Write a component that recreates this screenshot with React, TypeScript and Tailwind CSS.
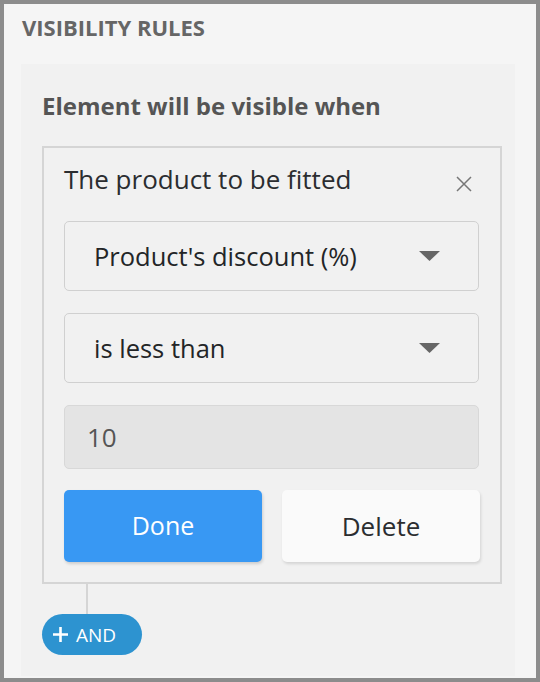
import React from 'react';

const font = { fontFamily: '"Open Sans", "Noto Sans", sans-serif' };

const Caret = () => (
  <svg width="21" height="10" viewBox="0 0 21 10" className="shrink-0">
    <path d="M0 0h21L10.5 10z" fill="#666" />
  </svg>
);

const SelectBox = ({ label }: { label: string }) => (
  <div className="flex h-[70px] w-[415px] items-center justify-between rounded-[5px] border border-[#d0d0d0] pl-[29px] pr-[38px]">
    <span className="text-[25.5px] leading-[32px] text-[#232527]">{label}</span>
    <Caret />
  </div>
);

export default function App() {
  return (
    <div
      className="box-border flex h-[682px] w-[540px] flex-col border-4 border-[#8c8c8c] bg-[#f5f5f5]"
      style={font}
    >
      <div className="h-[60px] shrink-0 pl-[18px] pt-[10px]">
        <h1 className="text-[22px] font-bold leading-[26px] text-[#666]">VISIBILITY RULES</h1>
      </div>

      <div className="mb-[2px] ml-[17px] mr-[21px] flex-1 bg-[#f1f1f1] pl-[21px] pt-[28px]">
        <h2 className="mb-[26px] text-[24px] font-bold leading-[28px] text-[#555]">
          Element will be visible when
        </h2>

        <div className="box-border w-[460px] border-2 border-[#d5d5d5] px-[20px] pb-[20px] pt-[15px]">
          <div className="mb-[26px] flex h-[32px] items-start justify-between">
            <span className="text-[26px] leading-[32px] text-[#2b2d30]">The product to be fitted</span>
            <svg width="16" height="16" viewBox="0 0 16 16" className="mr-[8px] mt-[13px]">
              <path d="M1 1l14 14M15 1L1 15" stroke="#777" strokeWidth="1.5" />
            </svg>
          </div>

          <div className="flex flex-col gap-[22px]">
            <SelectBox label="Product's discount (%)" />
            <SelectBox label="is less than" />
          </div>

          <div className="mt-[22px] flex h-[64px] w-[415px] items-center rounded-[5px] border border-[#d8d8d8] bg-[#e4e4e4] pl-[22px]">
            <span className="text-[26px] leading-[32px] text-[#555]">10</span>
          </div>

          <div className="mt-[21px] flex gap-[20px]">
            <button className="flex h-[72px] w-[198px] items-center justify-center rounded-[5px] bg-[#3898f3] text-[25px] text-white shadow-[1px_2px_3px_rgba(0,0,0,0.15)]">
              Done
            </button>
            <button className="flex h-[72px] w-[198px] items-center justify-center rounded-[5px] bg-[#fafafa] text-[26px] text-[#2b2d30] shadow-[1px_2px_3px_rgba(0,0,0,0.12)]">
              Delete
            </button>
          </div>
        </div>

        <div className="ml-[44px] h-[30px] w-[2px] bg-[#d5d5d5]" />

        <button className="flex h-[41px] w-[100px] items-center gap-[8px] rounded-full bg-[#2d93d0] pl-[11px] text-white">
          <svg width="15" height="15" viewBox="0 0 15 15">
            <path d="M7.5 0v15M0 7.5h15" stroke="#fff" strokeWidth="2.6" />
          </svg>
          <span className="text-[19px] leading-[22px]">AND</span>
        </button>
      </div>
    </div>
  );
}
